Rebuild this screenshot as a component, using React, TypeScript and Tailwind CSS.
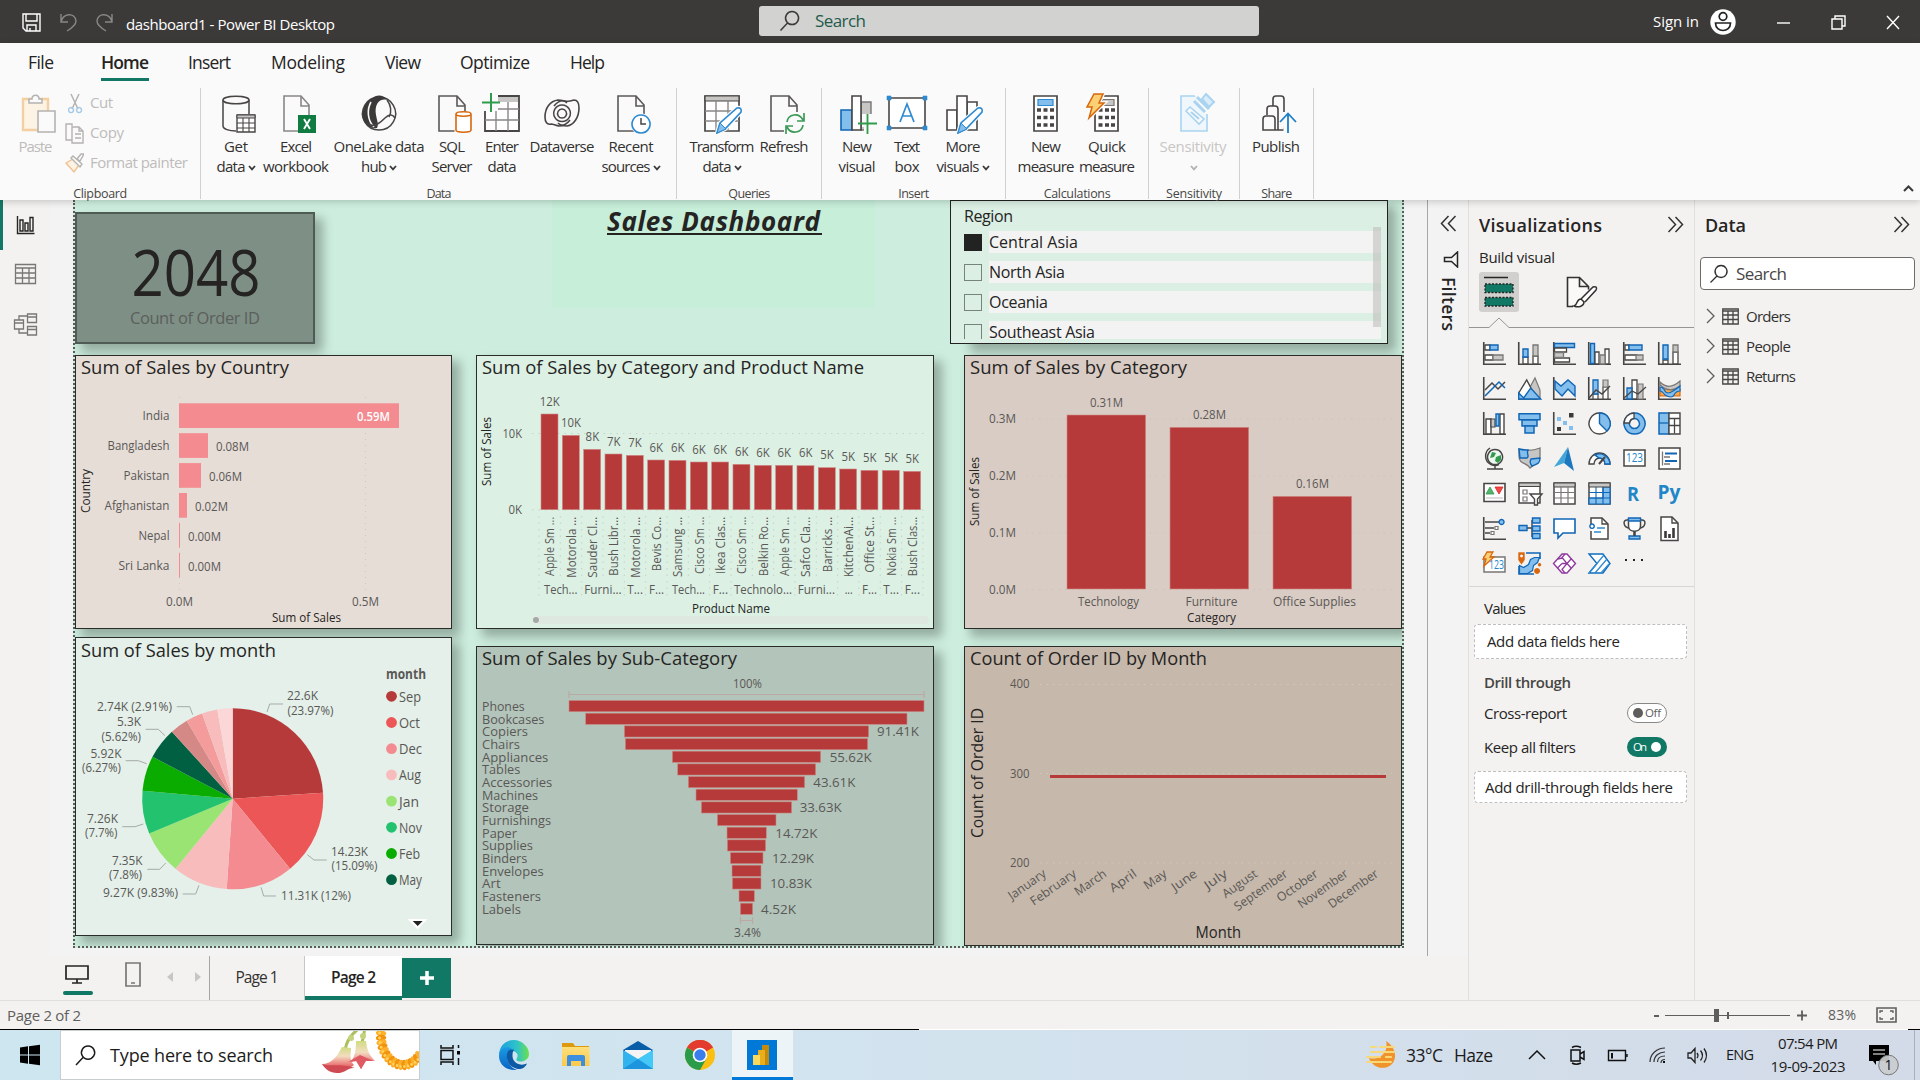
import React, { useLayoutEffect, useRef, useState } from "react";

const D = "#484644";
const B = "#1066b5";
const L = "#83beec";
const G = "#c8c6c4";
const M = "#797775";
const RED = "#b63a3a";
const SOFT = "#5a5856";
const INK = "#252423";

/* Single line label whose tracking adapts so that it fills the given width. */
function Fit({ w, c = "", children }: { w: number; c?: string; children: string }) {
  const ref = useRef<HTMLSpanElement>(null);
  const [ls, setLs] = useState(0);
  useLayoutEffect(() => {
    const el = ref.current;
    if (!el) return;
    const natural = el.getBoundingClientRect().width;
    setLs((w - natural) / Math.max(1, children.length - 1));
  }, []);
  return (
    <span className={"inline-block shrink-0 whitespace-nowrap " + c} style={{ width: w }}>
      <span ref={ref} style={{ letterSpacing: ls }}>{children}</span>
    </span>
  );
}

type TxProps = {
  x: number; y: number; w?: number; s?: number; f?: string; a?: "start" | "middle" | "end";
  b?: number; r?: number; children: string;
};
/* Chart text: y is the middle of the capital letters. */
function Tx({ x, y, w, s = 12.3, f = SOFT, a = "start", b = 400, r, children }: TxProps) {
  return (
    <text
      x={x} y={y} dy={s * 0.357 - (r ? 0 : 0.4)} fontSize={s} fill={f} textAnchor={a} fontWeight={b}
      textLength={w} lengthAdjust="spacingAndGlyphs"
      transform={r ? `rotate(${r} ${x} ${y})` : undefined}
    >
      {children}
    </text>
  );
}

type Shape = [string, string?, string?, number?];
function Draw({ s }: { s: Shape[] }) {
  return (
    <>
      {s.map(([d, f = "none", k = D, sw = 1.4], i) => (
        <path key={i} d={d} fill={f} stroke={k} strokeWidth={sw} />
      ))}
    </>
  );
}
const N = "none";

/* ---------- ribbon ---------- */
const DOC = (x: number): Shape => [`M${x} 96h18l8 9v26h-26zM${x + 18} 96v10h8`, "#fafafa", "#5b5957", 1.6];

const ic: Record<string, React.ReactNode> = {
  get: <Draw s={[
    ["M223 100v26c0 3 6 5 13 5M249 100v14", N, D, 1.5],
    ["M223 100c0-5 26-5 26 0s-26 5-26 0z", "#fafafa", D, 1.5],
    ["M237 115h18v17h-18z", "#fff", D, 1.4], ["M237 115h18v3h-18z", G, D, 1],
    ["M237 123h18M237 128h18M243 118v14M249 118v14", N, D, 1.1]]} />,
  excel: <><Draw s={[["M284 96h17l8 9v26h-25zM301 96v10h8", "#fafafa", "#8a8886", 1.6], ["M298 115h18v18h-18z", "#107c41", N]]} />
    <Draw s={[["M304 119l6 10M310 119l-6 10", N, "#fff", 1.9]]} /></>,
  lake: <Draw s={[
    ["M379 97a16.500 16.500 0 1 0 .1 0z", "#fafafa", D, 1.5],
    ["M373 98c4-4 11-3 14 2c-7-2-13 4-11 15c1 6 3 9 1 13c-6 1-12-3-14-9c-2-8 2-18 10-21z", "#3b3a39", N],
    ["M371 102c-4 7-4 18 3 25", N, "#fafafa", 1.6],
    ["M367 123c6 6 13 0 18-5s8-3 10 0M387 100c4 5 5 12 2 17", N, D, 1.5]]} />,
  sql: <Draw s={[DOC(439), ["M456 113h16v20h-16z", "#fafafa", "#fafafa", 3],
    ["M456 114v16c0 3 15 3 15 0v-16c0-3-15-3-15 0s15 3 15 0", "#fff", "#d8670d", 1.6]]} />,
  enter: <Draw s={[["M485 96h34v35h-34z", "#fff", D, 1.8], ["M497 97h21v5h-21z", G, N], ["M485 109h34M485 120h34M496 104v27M508 102v29", N, "#8a8886", 1.4],
    ["M480 94h18v17h-18z", "#fafafa", N], ["M491 93v19M482 102.500h18", N, "#2f9b4c", 2]]} />,
  verse: <Draw s={[
    ["M570 120c-3 4-7 6-11 6c-4-1-6-2-8-2c-4 1-6-2-6-7c0-9 5-16 13-17c4 0 7 1 9 3", N, D, 1.6],
    ["M554 106c3-4 7-6 11-5c4 1 6 0 9-1c4 0 5 3 5 8c0 9-5 17-12 18c-4 0-7-1-9-3", N, D, 1.6],
    ["M562 105a8.300 8.300 0 1 0 .1 0zM562 109a4.500 4.500 0 1 0 .1 0z", N, D, 1.5]]} />,
  recent: <Draw s={[DOC(618), ["M641 115a9 9 0 1 0 .1 0z", "#fafafa", "#fafafa", 3], ["M641 115a9 9 0 1 0 .1 0z", "#fff", "#2e8ad0", 1.6], ["M641 118v6h5", N, D, 1.5]]} />,
  transform: <Draw s={[["M705 96h34v35h-34z", "#fff", D, 1.7], ["M705 96h34v5h-34z", G, D, 1.2], ["M705 111h34M705 121h34M716 101v30M728 101v30", N, "#8a8886", 1.4],
    ["M717 133l3-10l17-15q5-1 4 4l-16 17z", "#fff", "#fafafa", 4], ["M717 133l3-10l17-15q5-1 4 4l-16 17z", "#fff", "#2e8ad0", 1.6], ["M717 133l3-10l6 6z", L, "#2e8ad0", 1]]} />,
  refresh: <Draw s={[DOC(771), ["M784 112h22v22h-22z", "#fafafa", N], ["M787 122c1-8 12-10 16-2M803 125c-1 8-12 10-16 2M804 113v8h-7M786 134v-8h7", N, "#3c9a58", 1.7]]} />,
  visual: <Draw s={[["M861 102h10v28h-10z", G, M, 1.4], ["M841 110h11v20h-11z", L, B, 1.6], ["M852 96h9v34h-9z", "#fff", D, 1.6], ["M862 114h15v20h-13v-7h-2z", "#fafafa", N], ["M867.500 114v20M858 123.500h19", N, "#2f9b4c", 1.8]]} />,
  textbox: <><Draw s={[["M889 98h36v30h-36z", "#fff", D, 1.6], ["M887 96h4v4h-4zM923 96h4v4h-4zM887 126h4v4h-4zM923 126h4v4h-4z", "#2e8ad0", "#2e8ad0", .6], ["M900 122l7-18l7 18M902.500 116h9", N, "#2e8ad0", 1.7]]} /></>,
  more: <Draw s={[["M947 110h10v20h-10zM967 102h10v28h-10z", "#fff", D, 1.6], ["M957 96h10v34h-10z", "#fff", D, 1.6],
    ["M958 133l3-10l17-15q5-1 4 4l-16 17z", "#fff", "#fafafa", 4], ["M958 133l3-10l17-15q5-1 4 4l-16 17z", "#fff", "#2e8ad0", 1.6], ["M958 133l3-10l6 6z", L, "#2e8ad0", 1]]} />,
  measure: <Draw s={[["M1034 96h23v35h-23z", "#fff", D, 1.7], ["M1038 99.500h15v6h-15z", L, "#2e8ad0", 1.2], ["M1037 110h4M1043.500 110h4M1050 110h4M1037 117.500h4M1043.500 117.500h4M1050 117.500h4M1037 125h4M1043.500 125h4M1050 125h4", N, D, 3.6]]} />,
  quick: <Draw s={[["M1095 96h23v35h-23z", "#fff", D, 1.7], ["M1102 99.500h12v6h-12z", G, M, 1.2], ["M1098.500 110h4M1105 110h4M1111 110h4M1098.500 117.500h4M1105 117.500h4M1111 117.500h4M1098.500 125h4M1105 125h4M1111 125h4", N, D, 3.6],
    ["M1094 94h9l-4 9h5l-15 15l3-11h-5z", "#fafafa", "#fafafa", 4], ["M1094 94h9l-4 9h5l-15 15l3-11h-5z", "#fbcf73", "#d8670d", 1.5]]} />,
  sens: <Draw s={[["M1181 96h26v35h-26z", "#eff7fc", "#a9d3f0", 1.6], ["M1194 94h22v20h-10z", "#fafafa", N],
    ["M1186 111l4-4l14 12l-5 5z", "#fafafa", "#a9d3f0", 1.6], ["M1191 112l8 7", N, "#a9d3f0", 2.2],
    ["M1197 97l12 12M1194 101l11 11", N, "#a9d3f0", 3], ["M1202 99l4-5l8 8l-5 5z", "#d9ecf8", "#a9d3f0", 2]]} />,
  publish: <Draw s={[["M1284 130v-31q0-3-3-3h-5q-3 0-3 3v7M1278 130v-21q0-3-3-3h-5q-3 0-3 3v6", "#fafafa", D, 1.6], ["M1275 130v-11q0-3-3-3h-6q-3 0-3 3v11h24", "#fafafa", D, 1.6], ["M1281 112h15v22h-12z", "#fafafa", N], ["M1288 133v-19M1280 122l8-8.500l8 8.500", N, "#1f7fc4", 1.8]]} />,
};

type Btn = { x: number; w: number; i: string; a: string; aw: number; b?: string; bw?: number; v?: boolean; off?: boolean };
const groups: { w: number; label: string; lw: number; btns: Btn[] }[] = [
  { w: 476, label: "Data", lw: 25, btns: [
    { x: 211, w: 50, i: "get", a: "Get", aw: 24, b: "data", bw: 29, v: true },
    { x: 261, w: 70, i: "excel", a: "Excel", aw: 32, b: "workbook", bw: 66 },
    { x: 331, w: 96, i: "lake", a: "OneLake data", aw: 91, b: "hub", bw: 26, v: true },
    { x: 427, w: 50, i: "sql", a: "SQL", aw: 26, b: "Server", bw: 41 },
    { x: 477, w: 50, i: "enter", a: "Enter", aw: 34, b: "data", bw: 29 },
    { x: 527, w: 70, i: "verse", a: "Dataverse", aw: 65 },
    { x: 597, w: 68, i: "recent", a: "Recent", aw: 45, b: "sources", bw: 49, v: true }] },
  { w: 145, label: "Queries", lw: 42, btns: [
    { x: 687, w: 70, i: "transform", a: "Transform", aw: 65, b: "data", bw: 29, v: true },
    { x: 757, w: 54, i: "refresh", a: "Refresh", aw: 49 }] },
  { w: 184, label: "Insert", lw: 31, btns: [
    { x: 832, w: 50, i: "visual", a: "New", aw: 30, b: "visual", bw: 37 },
    { x: 882, w: 50, i: "textbox", a: "Text", aw: 26, b: "box", bw: 25 },
    { x: 932, w: 62, i: "more", a: "More", aw: 35, b: "visuals", bw: 43, v: true }] },
  { w: 143, label: "Calculations", lw: 67, btns: [
    { x: 1016, w: 60, i: "measure", a: "New", aw: 30, b: "measure", bw: 57 },
    { x: 1076, w: 62, i: "quick", a: "Quick", aw: 38, b: "measure", bw: 56 }] },
  { w: 91, label: "Sensitivity", lw: 56, btns: [{ x: 1158, w: 70, i: "sens", a: "Sensitivity", aw: 67, v: true, off: true }] },
  { w: 74, label: "Share", lw: 31, btns: [{ x: 1248, w: 56, i: "publish", a: "Publish", aw: 48 }] },
];

const Chev = ({ c = "#3b3a39" }: { c?: string }) => (
  <svg width="8" height="6" viewBox="0 0 8 6" className="mt-[4px] ml-[2px]"><path d="M1 1l3 3.300L7 1" fill="none" stroke={c} strokeWidth="1.800" /></svg>
);

function Ribbon() {
  return (
    <div className="relative z-20 h-[157px] bg-[#fafafa] shadow-[0_2px_7px_rgba(0,0,0,0.18)]">
      <div className="flex h-[45px] items-start pl-7 text-[17.5px] leading-[38px] text-[#252423]">
        <Fit w={26}>File</Fit>
        <div className="ml-[47px] h-[38px] border-b-3 border-[#117865] font-semibold"><Fit w={48}>Home</Fit></div>
        <Fit w={43} c="ml-[39px]">Insert</Fit>
        <Fit w={74} c="ml-10">Modeling</Fit>
        <Fit w={36} c="ml-10">View</Fit>
        <Fit w={70} c="ml-[39px]">Optimize</Fit>
        <Fit w={35} c="ml-10">Help</Fit>
      </div>
      <div className="flex h-[111px]">
        <div className="flex w-[201px] flex-col border-r border-[#d2d0ce] text-[15px] text-[#bebcba]">
          <div className="flex h-[92px] shrink-0">
            <div className="ml-[18px] flex w-[35px] flex-col items-center">
              <svg width="36" height="40" viewBox="20 94 36 40" className="mt-1.5 ml-1.5 shrink-0">
                <Draw s={[["M22 99h25v31h-25z", "#fdf3e4", "#f3cfa2", 2.4], ["M28 103v-4h3c0-5 7-5 7 0h3v4z", "#fafafa", "#b5b3b1", 1.5], ["M37 111h17v21h-17z", "#fafafa", "#b5b3b1", 1.6]]} />
              </svg>
              <Fit w={34} c="mt-[2px] leading-5">Paste</Fit>
            </div>
            <div className="ml-3 leading-[28px]">
              <div className="flex h-[30px] items-center gap-[6px]">
                <svg width="19" height="24" viewBox="65 91 19 24"><Draw s={[["M71 94l7 15M79 94l-7 15", N, "#b5b3b1", 1.5], ["M71 107.500a2.500 2.500 0 1 0 .1 0zM79 107.500a2.500 2.500 0 1 0 .1 0z", N, "#a6cbe6", 1.5]]} /></svg>
                <Fit w={23} c="mb-0.5">Cut</Fit>
              </div>
              <div className="flex h-[30px] items-center gap-[6px]">
                <svg width="19" height="24" viewBox="65 121 19 24"><Draw s={[["M72 126v-2h-6v16h6", N, "#b5b3b1", 1.4], ["M72 127h7l4 4v12h-11zM79 127v4h4M75 134h6M75 138h6", "#fafafa", "#b5b3b1", 1.4]]} /></svg>
                <Fit w={34} c="mb-0.5">Copy</Fit>
              </div>
              <div className="flex h-[30px] items-center gap-[6px]">
                <svg width="19" height="24" viewBox="65 151 19 24"><Draw s={[["M66 163l7-4l6 6l-5 7z", "#fdf3e4", "#f0c190", 1.4], ["M71 158l2-2l9 8l-2 3zM77 159l4-5h3l-4 7z", "#fafafa", "#b5b3b1", 1.4]]} /></svg>
                <Fit w={98} c="mb-0.5">Format painter</Fit>
              </div>
            </div>
          </div>
          <div className="pt-[7px] text-center text-[12.5px] leading-[14px] text-[#484644]"><Fit w={54}>Clipboard</Fit></div>
        </div>
        {groups.map((g) => (
          <div key={g.label} className="flex flex-col border-r border-[#d2d0ce]" style={{ width: g.w }}>
            <div className={"flex h-[92px] shrink-0 text-[15px] leading-5 " + (g.label === "Share" ? "pl-2" : g.label === "Sensitivity" ? "pl-[9px]" : "pl-2.5")}>
              {g.btns.map((b) => (
                <div key={b.x} className={"flex shrink-0 flex-col items-center " + (b.off ? "text-[#c8c6c4]" : "text-[#323130]")} style={{ width: b.w }}>
                  <svg width={b.w} height="42" viewBox={`${b.x} 92 ${b.w} 42`} className="mt-1 mb-[2px] block shrink-0">{ic[b.i]}</svg>
                  <Fit w={b.aw}>{b.a}</Fit>
                  <div className="flex h-5 items-center">
                    {b.b && <Fit w={b.bw ?? 0}>{b.b}</Fit>}
                    {b.v && <Chev c={b.off ? "#b3b0ad" : "#3b3a39"} />}
                  </div>
                </div>
              ))}
            </div>
            <div className="pt-[7px] text-center text-[12.5px] leading-[14px] text-[#484644]"><Fit w={g.lw}>{g.label}</Fit></div>
          </div>
        ))}
        <div className="flex flex-1 items-end justify-end pr-1.5 pb-[7px]">
          <svg width="11" height="7" viewBox="0 0 11 7"><path d="M1 6l4.500-4.500L10 6" fill="none" stroke="#3b3a39" strokeWidth="2" /></svg>
        </div>
      </div>
    </div>
  );
}

function TitleBar() {
  return (
    <div className="flex h-[43px] items-center bg-[#3b3a38] text-white">
      <svg width="96" height="22" viewBox="20 11 96 22" className="ml-5">
        <Draw s={[["M23 14h17v17h-14l-3-3zM26 14v7h11v-7M27 31v-6h9v6M30 31v-3", N, "#fff", 1.4],
          ["M61 14v8h7M61 22c2-9 14-10 15-1c0 4-4 7-9 10", N, "#8a8886", 1.4],
          ["M112 14v8h-7M112 22c-2-9-14-10-15-1c0 4 4 7 9 10", N, "#8a8886", 1.4]]} />
      </svg>
      <Fit w={209} c="ml-2.5 mt-1.5 text-[15px]">dashboard1 - Power BI Desktop</Fit>
      <div className="-mt-px ml-[424px] flex h-[30px] w-[500px] items-center rounded-[3px] bg-[#d2d2d0] text-[17px] text-[#1f5a4c]">
        <svg width="22" height="22" viewBox="0 0 22 22" className="ml-5"><path d="M13 1.500a6.500 6.500 0 1 0 .1 0zM8.500 13L1.500 20.500" fill="none" stroke="#3b3a39" strokeWidth="1.500" /></svg>
        <Fit w={51} c="ml-[14px]">Search</Fit>
      </div>
      <Fit w={46} c="ml-[394px] text-[15px]">Sign in</Fit>
      <svg width="26" height="26" viewBox="0 0 26 26" className="ml-[11px]">
        <circle cx="13" cy="13" r="12.700" fill="#fff" />
        <circle cx="13" cy="7.500" r="3.800" fill="none" stroke="#222" strokeWidth="1.700" />
        <path d="M5.500 14h15c0 10-15 10-15 0z" fill="none" stroke="#222" strokeWidth="1.700" />
      </svg>
      <svg width="130" height="20" viewBox="1774 13 130 20" className="ml-[38px]">
        <Draw s={[["M1777 24h13", N, "#fff", 1.4], ["M1832 20h10v10h-10zM1835 20v-3h10v10h-3", N, "#fff", 1.4], ["M1887 17l12 13M1899 17l-12 13", N, "#fff", 1.4]]} />
      </svg>
    </div>
  );
}

/* ---------- report visuals ---------- */
const card = "block shrink-0 border border-[#2a2c2a] shadow-[7px_7px_10px_1px_rgba(0,0,0,0.28)] ";

function CountryChart() {
  const rows: [string, number, number, string, number][] = [
    ["India", 399, 27, "0.59M", 357], ["Bangladesh", 208, 62, "0.08M", 216], ["Pakistan", 201, 46, "0.06M", 209],
    ["Afghanistan", 187, 65, "0.02M", 195], ["Nepal", 180, 31, "0.00M", 188], ["Sri Lanka", 180, 51, "0.00M", 188]];
  return (
    <svg width="377" height="274" viewBox="76 356 375 272" className={card + "mt-[11px] bg-[#e6ddd6]"}>
      <Tx x={81} y={368} w={208} s={18.500} f={INK}>Sum of Sales by Country</Tx>
      <path d="M179.500 397v194M365.500 397v194" stroke="#cfc6c0" strokeDasharray="1 5" />
      {rows.map(([n, x, w, v, vx], i) => (
        <g key={n}>
          <rect x="179" y={403.300 + i * 29.900} width={x - 179} height="24.700" fill="#f48b90" />
          <Tx x={169.500} y={416.300 + i * 29.950} w={w} a="end">{n}</Tx>
          <Tx x={vx} y={417 + i * 29.950} w={33} f={i ? SOFT : "#fff"} b={i ? 400 : 600}>{v}</Tx>
        </g>
      ))}
      <Tx x={166} y={602} w={27}>0.0M</Tx><Tx x={352} y={602} w={27}>0.5M</Tx>
      <Tx x={272} y={618.500} w={69} f={INK}>Sum of Sales</Tx>
      <Tx x={86} y={513} w={44} f={INK} r={-90}>Country</Tx>
    </svg>
  );
}

const products: [string, number, string, number][] = [
  ["12K", 222, "Apple Sm ...", 708], ["10K", 286, "Motorola  ...", 713], ["8K", 328, "Sauder Cl...", 713], ["7K", 342, "Bush Libr...", 707],
  ["7K", 346, "Motorola  ...", 713], ["6K", 360, "Bevis Co...", 694], ["6K", 361, "Samsung ...", 711], ["6K", 366, "Cisco Sm ...", 702],
  ["6K", 366, "Ikea Clas...", 702], ["6K", 373, "Cisco Sm ...", 702], ["6K", 376, "Belkin Ro...", 709], ["6K", 376, "Apple Sm ...", 708],
  ["6K", 377, "Safco Cla...", 711], ["5K", 383, "Barricks  ...", 697], ["5K", 387, "KitchenAi...", 712], ["5K", 391, "Office St...", 698],
  ["5K", 391, "Nokia Sm ...", 707], ["5K", 394, "Bush Clas...", 709]];
const cats: [string, number, number][] = [["Tech...", 252, 352], ["Furni...", 373, 485], ["T...", 502, 549], ["F...", 567, 612], ["Tech...", 636, 735], ["F...", 758, 804],
  ["Technolo...", 822, 996], ["Furni...", 1013, 1125], ["...", 1154, 1178], ["F...", 1206, 1251], ["T...", 1270, 1317], ["F...", 1334, 1380]];

function ProductChart() {
  const long = [0, 2, 4, 5, 6, 8, 9, 12, 14, 15, 16, 17, 18];
  return (
    <svg width="458" height="274" viewBox="477 356 456 272" className={card + "bg-[#dcf0e4]"}>
      <Tx x={482} y={368} w={382} s={18.500} f={INK}>Sum of Sales by Category and Product Name</Tx>
      <path d="M532 433.500h394M532 510h394" stroke="#c4d3ca" strokeDasharray="1.500 5" />
      {Array.from({ length: 19 }, (_, k) => (
        <path key={k} d={`M${539 + k * 21.330} 516V${long.includes(k) ? 598 : 578}`} stroke="#c4d3ca" strokeDasharray="1.500 5" />
      ))}
      {products.map(([v, t, n, bt], i) => {
        const x = 541 + i * 21.330;
        return (
          <g key={i}>
            <rect x={x} y={340 + t / 3} width="17" height={169.700 - t / 3} fill={RED} stroke="#cf8d88" strokeWidth=".6" />
            <Tx x={x + 8.700} y={340 + t / 3 - 12.200} w={v.length > 2 ? 20 : 13.500} a="middle">{v}</Tx>
            <Tx x={x + 9} y={340 + bt / 3} w={(bt - 530) / 3} r={-90}>{n}</Tx>
          </g>
        );
      })}
      {cats.map(([n, a, b]) => <Tx key={a} x={460 + a / 3} y={590.500} w={(b - a) / 3}>{n}</Tx>)}
      <Tx x={522} y={434} w={19.500} a="end">10K</Tx><Tx x={522} y={510} w={13.500} a="end">0K</Tx>
      <Tx x={692} y={609} w={78} f={INK}>Product Name</Tx>
      <Tx x={487} y={486} w={69} f={INK} r={-90}>Sum of Sales</Tx>
      <rect x="534" y="616" width="395" height="8" rx="4" fill="#dfe7e1" />
      <circle cx="536" cy="620" r="3.600" fill="#a3a9a5" stroke="#f3f7f4" strokeWidth=".8" />
    </svg>
  );
}

function CategoryChart() {
  const bars: [string, number, number, string, number, number, number][] = [
    ["0.31M", 1067, 415, "Technology", 1078, 61, 403], ["0.28M", 1170, 427.300, "Furniture", 1185.500, 52, 415], ["0.16M", 1273, 496.300, "Office Supplies", 1273, 83, 484]];
  return (
    <svg width="438" height="274" viewBox="965 356 436 272" className={card + "mt-[11px] bg-[#d9ccc4]"}>
      <Tx x={970} y={368} w={217} s={18.500} f={INK}>Sum of Sales by Category</Tx>
      <path d="M1026 419h370M1026 476h370M1026 533h370M1026 589.500h370" stroke="#cdc3bc" strokeDasharray="1.500 5" />
      {bars.map(([v, x, y, n, nx, nw, vy]) => (
        <g key={n}>
          <rect x={x} y={y} width="78.700" height={589 - y} fill={RED} stroke="#cf8d88" strokeWidth=".6" />
          <Tx x={x + 39.500} y={vy} w={33} a="middle">{v}</Tx>
          <Tx x={nx} y={602.500} w={nw}>{n}</Tx>
        </g>
      ))}
      {["0.3M", "0.2M", "0.1M", "0.0M"].map((v, i) => <Tx key={v} x={989} y={419.300 + i * 57} w={27}>{v}</Tx>)}
      <Tx x={1187} y={618.500} w={49} f={INK}>Category</Tx>
      <Tx x={975} y={526} w={69} f={INK} r={-90}>Sum of Sales</Tx>
    </svg>
  );
}

const slices: [number, string][] = [[86.300, RED], [140.600, "#ec5656"], [183.800, "#f48b90"], [219.200, "#f8bcbd"], [247.300, "#99e472"], [275, "#23c26f"],
  [297.600, "#0aac00"], [317.800, "#016042"], [329.500, "#d58987"], [340.200, "#f49b9b"], [350.200, "#f8bcbd"], [360, "#fbd7d7"]];
const legend: [string, number][] = [["Sep", 22], ["Oct", 21], ["Dec", 23], ["Aug", 22], ["Jan", 20], ["Nov", 23], ["Feb", 21], ["May", 23]];
const pieText: [string, number, number, number][] = [
  ["22.6K", 287, 696.500, 31], ["(23.97%)", 287.500, 711, 46], ["14.23K", 331, 852.500, 37], ["(15.09%)", 331.500, 866.500, 46], ["11.31K (12%)", 281, 896, 70],
  ["9.27K (9.83%)", 103, 893, 75], ["7.35K", 112, 861.500, 30.500], ["(7.8%)", 109, 875.500, 33], ["7.26K", 87, 819, 31], ["(7.7%)", 85, 833, 32.500],
  ["5.92K", 90.500, 754, 31], ["(6.27%)", 82, 768, 39], ["5.3K", 117, 722, 24], ["(5.62%)", 101.500, 737, 39.500], ["2.74K (2.91%)", 97, 707, 75]];

function PieChart() {
  const pt = (deg: number) => {
    const a = (deg * Math.PI) / 180;
    return `${232.700 + 90.500 * Math.sin(a)} ${798.700 - 90.500 * Math.cos(a)}`;
  };
  return (
    <svg width="377" height="299" viewBox="76 638 375 297" className={card + "mt-2 bg-[#e4f0e9]"}>
      <Tx x={81} y={651} w={195} s={18.500} f={INK}>Sum of Sales by month</Tx>
      {slices.map(([e, c], i) => (
        <path key={i} d={`M232.700 798.700L${pt(i ? slices[i - 1][0] : 0)}A90.500 90.500 0 0 1 ${pt(e)}Z`} fill={c} />
      ))}
      <path d="M267 712l2.700-8h13.300M307.300 854.700l6.700 5.300h12.700M261 887.300l2.700 8.700h12.300M199 885.300l-3.300 8.700h-13M165.700 863l-6 6.300h-12.400M143.300 824l-8.300 2.700h-12.700M146.700 763.700l-8.400-3h-12.600M165 735.700l-6.700-6.400h-12.600M192.700 714.700l-3-8h-13" fill="none" stroke="#a5aca8" />
      {pieText.map(([t, x, y, w]) => <Tx key={t} x={x} y={y} w={w}>{t}</Tx>)}
      <Tx x={386} y={674.500} w={40} s={14} b={700}>month</Tx>
      {legend.map(([n, w], i) => (
        <g key={n}>
          <circle cx="391.500" cy={696.300 + i * 26.200} r="5.400" fill={slices[i][1]} />
          <Tx x={399} y={697 + i * 26.200} w={w} s={14.300}>{n}</Tx>
        </g>
      ))}
      <path d="M407.500 919h20L417.700 929.500z" fill="#fff" /><path d="M412.700 921h10L417.700 926z" fill="#222" />
    </svg>
  );
}

const funnel: [string, number, number, number, string?, number?][] = [
  ["Phones", 327, 1392, 194], ["Bookcases", 377, 1341, 253], ["Copiers", 493, 1226, 204, "91.41K", 1251], ["Chairs", 496, 1223, 180],
  ["Appliances", 637, 1082, 265, "55.62K", 1109], ["Tables", 653, 1067, 181], ["Accessories", 685, 1034, 277, "43.61K", 1060], ["Machines", 708, 1012, 234],
  ["Storage", 724, 995, 207, "33.63K", 1019], ["Furnishings", 772, 948, 273], ["Paper", 801, 919, 171, "14.72K", 946], ["Supplies", 802, 917, 219],
  ["Binders", 811, 909, 202, "12.29K", 936], ["Envelopes", 816, 903, 251], ["Art", 817, 903, 122, "10.83K", 930], ["Fasteners", 837, 883, 243], ["Labels", 841, 878, 183, "4.52K", 903]];

function FunnelChart() {
  return (
    <svg width="458" height="299" viewBox="477 647 456 297" className={card + "mt-[17px] bg-[#b3c4ba]"}>
      <Tx x={482} y={659} w={255} s={18.500} f={INK}>Sum of Sales by Sub-Category</Tx>
      <Tx x={747.500} y={683.500} w={29} s={13.300} a="middle">100%</Tx>
      <path d="M569 691v7M924 691v7M569 694.500h355M740.500 917v7M752.500 917v7M740.500 920.500h12" fill="none" stroke="#bda9a3" strokeWidth="1.200" />
      {funnel.map(([n, a, b, e, v, vx], i) => (
        <g key={n}>
          <rect x={460 + a / 3} y={700.500 + i * 12.667} width={(b - a) / 3} height="11.200" fill={RED} stroke="#c98b86" strokeWidth=".6" />
          <Tx x={482} y={706.700 + i * 12.667} w={(e - 66) / 3} s={13.300}>{n}</Tx>
          {v && <Tx x={460 + (vx ?? 0) / 3} y={706.500 + i * 12.667} w={v.length > 5 ? 42 : 35} s={13.300}>{v}</Tx>}
        </g>
      ))}
      <Tx x={747.500} y={932.500} w={27} s={13.300} a="middle">3.4%</Tx>
    </svg>
  );
}

const months: [string, number][] = [["January", 43], ["February", 53], ["March", 36], ["April", 30], ["May", 25], ["June", 28], ["July", 25], ["August", 40], ["September", 62], ["October", 47], ["November", 58], ["December", 58]];

function LineChart() {
  return (
    <svg width="438" height="300" viewBox="965 647 436 298" className={card + "mt-[17px] bg-[#c6b8ab]"}>
      <Tx x={970} y={659} w={237} s={18.500} f={INK}>Count of Order ID by Month</Tx>
      {["400", "300", "200"].map((v, i) => <Tx key={v} x={1010} y={684.300 + i * 89.500} w={19.500}>{v}</Tx>)}
      <path d="M1040 684.500h355M1040 773.500h355M1040 863h355" stroke="#d3c7bc" strokeDasharray="1.500 5" />
      <path d="M1050 776.500h336" stroke={RED} strokeWidth="3" />
      {months.map(([m, w], i) => <Tx key={m} x={1044.500 + i * 30.200} y={872} w={w} a="end" r={-35}>{m}</Tx>)}
      <Tx x={1195.500} y={933} w={45.500} s={16.300} f={INK}>Month</Tx>
      <Tx x={977.500} y={838} w={130} s={16.300} f={INK} r={-90}>Count of Order ID</Tx>
    </svg>
  );
}

function Slicer() {
  const rows: [string, number][] = [["Central Asia", 89], ["North Asia", 76], ["Oceania", 59], ["Southeast Asia", 106]];
  return (
    <div className="relative -ml-3.5 h-36 w-[438px] shrink-0 overflow-hidden border border-[#222] bg-[#dbefe4] text-[16px] text-[#252423]">
      <div className="h-[27px] pt-[4px] pl-[13px] leading-[22px]"><Fit w={49}>Region</Fit></div>
      <div className="flex h-[112px] flex-col gap-2 overflow-hidden pt-[3px]">
        {rows.map(([n, w], i) => (
          <div key={n} className="flex h-[22px] shrink-0 items-center pl-[13px]">
            <div className={"h-[17px] w-[18px] border " + (i ? "border-[#75857c]" : "border-[#222] bg-[#222]")} />
            <div className="ml-[7px] h-[22px] w-[392px] bg-[#f3f3f3] leading-[23px]"><Fit w={w}>{n}</Fit></div>
          </div>
        ))}
      </div>
      <div className="absolute bottom-0 left-0 h-[4px] w-full bg-[#dbefe4]" />
      <div className="absolute top-[26px] right-[6px] h-[100px] w-2 bg-[#b9b5b2]/50" />
    </div>
  );
}

function Report() {
  return (
    <div className="flex h-[756px] w-[1377px] bg-[#f3f3f3] pl-[23px]">
      <div className="flex h-[748px] w-[1331px] overflow-hidden border-x-2 border-b-2 border-dotted border-[#5b5b5b] bg-[#cdeede]">
        <div className="w-[377px] shrink-0 pt-3">
          <div className="flex h-[132px] w-60 flex-col items-center border-2 border-[#4f5c55] bg-[#7e8f86] shadow-[7px_7px_10px_1px_rgba(0,0,0,0.28)]">
            <svg width="236" height="92" viewBox="77 214 236 92" className="shrink-0 overflow-visible"><Tx x={131.500} y={274} w={129} s={64} f={INK}>2048</Tx></svg>
            <Fit w={130} c="mt-[2px] text-[16.5px] leading-5 text-[#5c5f5c]">Count of Order ID</Fit>
          </div>
          <CountryChart />
          <PieChart />
        </div>
        <div className="ml-6 w-[458px] shrink-0">
          <div className="mb-[47px] ml-[76px] h-[108px] w-[323px] bg-[#c6eed9] pl-[55px] text-[26px] leading-[42px] font-bold text-[#252423] italic">
            <div className="h-[35px] w-[215px] border-b-2 border-[#252423]"><Fit w={213}>Sales Dashboard</Fit></div>
          </div>
          <ProductChart />
          <FunnelChart />
        </div>
        <div className="ml-[30px] w-[438px] shrink-0">
          <div className="h-36 w-[424px] shadow-[7px_7px_10px_1px_rgba(0,0,0,0.28)]"><Slicer /></div>
          <CategoryChart />
          <LineChart />
        </div>
      </div>
    </div>
  );
}

/* ---------- panes ---------- */
const AX: Shape = ["M.75 0v22.200H23", N, D, 1.6];
const vizIcons: Shape[][] = [
  [AX, ["M2 3h5v5h-5zM2 13h8v5h-8z", "#fff", D, 1.3], ["M7 3h8v5h-8z", L, B, 1.4], ["M10 13h10v5h-10z", G, M, 1.3]],
  [AX, ["M5 15h5v7h-5zM15 14h5v8h-5z", "#fff", D, 1.3], ["M5 7h5v8h-5z", L, B, 1.4], ["M15 3h5v11h-5z", G, M, 1.3]],
  [AX, ["M1.500 1.500h20v4h-20z", L, B, 1.4], ["M1.500 6h12v4h-12zM1.500 16h15v4h-15z", "#fff", D, 1.3], ["M1.500 10.500h9v5h-9z", G, M, 1.3]],
  [AX, ["M2.500 1.500h4v20h-4z", L, B, 1.4], ["M7 10h4v12h-4zM17 7h4v15h-4z", "#fff", D, 1.3], ["M12 13h5v9h-5z", G, M, 1.3]],
  [AX, ["M2 3h4v5h-4zM2 13h12v5h-12z", "#fff", D, 1.3], ["M6 3h13v5h-13z", L, B, 1.4], ["M13 13h7v5h-7z", G, M, 1.3]],
  [AX, ["M5 18h5v4h-5zM15 10h5v12h-5z", "#fff", D, 1.3], ["M5 3h5v14h-5z", L, B, 1.4], ["M15 3h5v7h-5z", G, M, 1.3]],
  [AX, ["M2 13l7-7l6 6l7-7", N, D, 1.5], ["M2 19l14-14l6 6", N, B, 1.5]],
  [["M11 12l6-11l5 12v9h-5z", G, M, 1.2], ["M.7 16l8-13l10 19h-18z", "#fff", D, 1.4], ["M.7 16l5 5l7-10l10 11h-22z", L, B, 1.4]],
  [AX, ["M2 4l6 5l7-6l7 6v10l-7-7l-6 7l-7-7z", L, B, 1.4]],
  [AX, ["M5 17h5v5h-5zM15 10h5v12h-5z", "#fff", D, 1.2], ["M5 3h5v14h-5z", L, B, 1.3], ["M15 3h5v7h-5z", G, M, 1.2], ["M1 21l7-8l6 4l8-8", N, D, 1.4]],
  [AX, ["M9 3h5v19h-5z", "#fff", D, 1.3], ["M4 11h5v11h-5z", L, B, 1.3], ["M15 7h5v15h-5z", G, M, 1.2], ["M1 21l8-7l6 3l8-7", N, D, 1.3]],
  [AX, ["M2 12h20v7h-20z", "#f7a94b", "#d8670d", 1.2], ["M2 5q9 9 20-1v5q-10 8-20-1z", G, M, 1.2], ["M2 10q3 0 5 4t8 0t7-5v5q-4 0-6 4t-9 0q-3-4-5-4z", L, B, 1.2]],
  [AX, ["M3 7h5v15h-5zM17 2h4v20h-4z", "#fff", D, 1.4], ["M8 7h4v8h-4z", G, D, 1.2], ["M13 2h3v12h-3z", L, B, 1.4]],
  [["M1 1.700h21v6h-21z", L, B, 1.5], ["M4 8h15v6h-15z", L, B, 1.5], ["M7 14h9v7h-9z", L, B, 1.5]],
  [AX, ["M4 5h4v4h-4zM10 9h4v4h-4zM16 14h4v4h-4z", L, N], ["M16 1h4.500v4.500h-4.500zM4 15h4v4h-4z", "#3b3a39", N]],
  [["M11.500 1a10.500 10.500 0 1 0 .1 0z", "#fff", D, 1.4], ["M11.500 1a10.500 10.500 0 0 1 7.500 18l-7.500-7.500z", L, B, 1.4]],
  [["M11.500 1a10.500 10.500 0 1 0 .1 0zM11.500 6.500a5 5 0 1 1-.1 0z", L, B, 1.5], ["M1 11a10.500 10.500 0 0 1 10-10v5.500a5 5 0 0 0-4.500 4.500z", "#fff", D, 1.3]],
  [["M1 1h10v21h-10z", L, B, 1.5], ["M11 1h11v21h-11z", "#fff", D, 1.4], ["M1 11h10", N, B, 1.3], ["M11 6.500h11M11 13.500h11M16.500 6.500v15", N, D, 1.3]],
  [["M12 2.500a7.500 7.500 0 1 0 .1 0z", "#eef6f0", D, 1.5], ["M9 5l4 1l-2 4l-4 1zM13 10l5-2v5l-3 3l-3-2z", "#2f9b4c", N], ["M7 1c-6 4-6 13 1 16.500c3 1.500 6 1 8 0M12 19v3M4 22h16", N, D, 1.5]],
  [["M1 2c7 2 14 2 21-1v8c0 8-6 8-10 12c-3-6-11-3-11-12z", G, M, 1.3], ["M1 2c4 1 7 1 9 1c-2 4 2 6-1 8h-7zM13 12l9-1c0 7-5 6-8 8c-2-2-2-5-1-7z", L, B, 1.4]],
  [["M15 0L1 20l10-4z", "#42a7d6", N], ["M15 0l6 24l-10-8z", "#1d78c0", N]],
  [["M1 17a10.500 11 0 0 1 21 0h-5a5.500 6 0 0 0-11 0z", "#fff", D, 1.4], ["M7 8a10.500 11 0 0 1 15 9h-5a5.500 6 0 0 0-6-6z", L, B, 1.4], ["M11 17l6-7", N, D, 2]],
  [["M1 3h21v16h-21z", "#fff", D, 1.5]],
  [["M1 1h21v21h-21z", "#fff", D, 1.5], ["M4.500 4.500v14M6 10h6M6 17h6", N, M, 1.3], ["M7 6.500h12M7 14h12", N, B, 2]],
  [["M1 1.500h21v18h-21z", "#fff", D, 1.6], ["M3 12l4-7l4 7z", "#57b26c", "#2f9b4c", .8], ["M12 5h8l-4 7z", "#ee4b4b", "#d22", .8], ["M3 16h17", N, G, 1.2]],
  [["M1 1h21v20h-21z", "#fff", D, 1.5], ["M1 1h21v3.500h-21z", G, D, 1], ["M5 8h4v4h-4zM5 15h4v4h-4z", "#fff", M, 1.2], ["M12 12h12l-4.500 5v6h-3v-6z", "#fff", D, 1.4]],
  [["M1 1h21v21h-21z", "#fff", D, 1.5], ["M1 1h21v4h-21z", G, D, 1], ["M1 10.500h21M1 16h21M8 5v17M15 5v17", N, M, 1.2]],
  [["M1 1h21v21h-21z", "#fff", D, 1.5], ["M15 5h7v17h-21v-6h14z", L, B, 1.2], ["M1 1h21v4h-21z", G, D, 1], ["M1 10.500h21M1 16h21M8 5v17M15 5v17", N, B, 1.1]],
  [], [],
  [AX, ["M2 5h14M2 11h9M2 16h5", N, D, 1.4], ["M18.500 2.500a2.500 2.500 0 1 0 .1 0z", L, B, 1.4], ["M12 9.500h3v3h-3zM8 14.500h3v3h-3z", "#fff", M, 1.2]],
  [["M9 11h5M14 3v17M14 3h3M14 20h3M14 11h3", N, D, 1.4], ["M1 8.500h8v5h-8zM14.500 1h7.500v5h-7.500zM14.500 9h7.500v5h-7.500zM14.500 16.500h7.500v5h-7.500z", L, B, 1.4]],
  [["M1 2h21v14h-12l-5 5v-5h-4z", "#fff", B, 1.6]],
  [["M3 7v-6h11l6 6v15h-17v-8", "#fff", D, 1.5], ["M14 1v6h6", N, D, 1.3], ["M4 7a2.200 2.200 0 1 0 .1 0z", "#fff", B, 1.4], ["M9 11h8M6 15h7", N, "#2e8ad0", 1.4]],
  [["M5 3c-6-1-5 8 2 8M18 3c6-1 5 8-2 8", N, D, 1.5], ["M5.500 2h12v7c0 7-12 7-12 0z", "#fff", D, 1.5], ["M5.500 1h12v3h-12zM6 19h11v3h-11z", L, B, 1.3], ["M11.500 14v5", N, D, 2.6]],
  [["M3 0h11l6 6v17.500h-17z", "#fff", D, 1.5], ["M14 0v6h6", N, D, 1.4], ["M7.500 14v7M11.500 17v4M15.500 11v10", N, "#3b3a39", 2.6]],
  [["M1 5h21v15h-21z", "#fff", M, 1.5], ["M4 0h6l-3 5h4l-10 9l2-7h-3z", "#fbcf73", "#d8670d", 1.3]],
  [["M8 1h14v6M1 14v8h15", N, B, 1.6], ["M1.500 21.500v-8l4 2l5-3l2-5l4-2h5l-2 5l-4 3l-1 5l-5 3z", L, B, 1.2], ["M0 0h7v8l-3.500 5l-3.500-5z", "#d8670d", "#f3f2f1", .6], ["M3.500 2.500a1.500 1.500 0 1 0 .1 0z", "#f3f2f1", N], ["M19 16a3 3 0 1 0 .1 0zM21.500 11a1.700 1.700 0 1 0 .1 0z", "#d8670d", N]],
  [["M9 2h5l8.500 9.500l-8.500 9.500h-5l-8.500-9.500z", "#fff", "#8f3a9c", 1.4], ["M12 2l-3 3.500l5 6l-5 6l3 3.500M4.500 7l5-1M14 11.500l4.500-5M9 11.500h5l4.500 5M4.500 16l4.500-4.500", N, "#8f3a9c", 1.3]],
  [["M1 2h14l7 9.500l-7 9.500h-14l8-9.500z", "#fff", "#0f6cbd", 1.4], ["M1 21l15-18M7 21l12-14M13 21l8-9", N, "#2e8ad0", 1.3]],
];

const blueText = "#1f86c8";
function VizGrid() {
  return (
    <div className="grid auto-rows-[35px] grid-cols-[repeat(6,35px)] pt-[14px] pl-3.5">
      {vizIcons.map((s, i) => (
        <svg key={i} width="25" height="25" viewBox="0 -1 25 25" className="-mt-px overflow-visible">
          <Draw s={s} />
          {i === 28 && <text x="4" y="19" fontSize="20" fontWeight="700" fill={blueText} textLength="12" lengthAdjust="spacingAndGlyphs">R</text>}
          {i === 29 && <text x="-.5" y="17" fontSize="20" fontWeight="700" fill={blueText} textLength="23" lengthAdjust="spacingAndGlyphs">Py</text>}
          {i === 22 && <text x="3" y="15" fontSize="12" fill={blueText} textLength="17" lengthAdjust="spacingAndGlyphs">123</text>}
          {i === 36 && <text x="6" y="17" fontSize="12" fill={blueText} textLength="15" lengthAdjust="spacingAndGlyphs">123</text>}
        </svg>
      ))}
      <svg width="25" height="25" viewBox="0 0 25 25"><path d="M2 8h2M10 8h2M18 8h2" stroke="#252423" strokeWidth="2" /></svg>
    </div>
  );
}

const Arrows = ({ left }: { left?: boolean }) => (
  <svg width="17" height="17" viewBox="0 0 17 17"><path d={left ? "M8.500 1L1.500 8.500l7 7.500M15.500 1L8.500 8.500l7 7.500" : "M1.500 1l7 7.500l-7 7.500M8.500 1l7 7.500l-7 7.500"} fill="none" stroke="#323130" strokeWidth="1.500" /></svg>
);

function Filters() {
  return (
    <div className="flex h-[756px] w-[41px] flex-col items-center border-l border-[#a8a6a4] bg-[#f3f3f3] pt-[15px]">
      <Arrows left />
      <svg width="17" height="17" viewBox="0 0 17 17" className="mt-[19px] ml-1"><path d="M15.500 1v15l-6-5.500h-7v-4h7z" fill="none" stroke="#252423" strokeWidth="1.500" /></svg>
      <div className="mt-[9px] ml-0.5 text-[17.5px] leading-[18px] font-semibold text-[#252423] [writing-mode:vertical-rl]">
        <span className="tracking-[0.3px]">Filters</span>
      </div>
    </div>
  );
}

function Visualizations() {
  return (
    <div className="h-[800px] w-[226px] border-l border-[#e1dfdd] bg-[#f3f2f1] text-[15px] text-[#252423]">
      <div className="flex h-[48px] items-end justify-between pr-2.5 pl-2.5 text-[18px] leading-[46px] font-semibold">
        <Fit w={123}>Visualizations</Fit>
        <div className="mb-[15px] leading-none"><Arrows /></div>
      </div>
      <div className="-mt-px pb-[2px] pl-[10px] leading-5"><Fit w={76}>Build visual</Fit></div>
      <svg width="225" height="60" viewBox="1469 269 225 60" className="-mb-px block">
        <rect x="1479" y="272" width="40" height="40" rx="3" fill="#d2d0ce" />
        <path d="M1484 277.500h24" stroke="#252423" strokeWidth="1.500" />
        <path d="M1485 284h28v8.500h-28zM1485 297.500h28v8.500h-28z" fill="#117865" stroke="#252423" strokeWidth="1.300" strokeDasharray="2 1.500" />
        <Draw s={[["M1573 306.500h-5.500v-29h12l9 9v3M1579.500 277.500v9h9", "#faf9f8", "#323130", 1.6], ["M1574 306c4-1 2-7 7-7l3 3c0 4-5 6-10 4zM1581 299l12-12q5-1 3 3l-11 12", "#fff", "#323130", 1.5],
          ["M1469 327.500h20l10-9.500l10 9.500h185", N, "#979593", 1]]} />
      </svg>
      <div className="h-[259px] border-b border-[#d8d6d4]"><VizGrid /></div>
      <div className="flex h-[37px] items-center pt-1.5 pl-[15px]"><Fit w={42}>Values</Fit></div>
      <div className="ml-[5px] flex h-[35px] w-[213px] items-center rounded-sm border border-dashed border-[#c0bebc] bg-white pl-[12px]"><Fit w={133}>Add data fields here</Fit></div>
      <div className="mt-[12px] pl-[15px] leading-[22px] font-semibold text-[#484644]"><Fit w={87}>Drill through</Fit></div>
      <div className="mt-[9px] flex h-[22px] items-center pl-[15px]">
        <Fit w={83}>Cross-report</Fit>
        <div className="ml-[60px] flex h-5 w-10 items-center rounded-full border border-[#8a8886] bg-white pl-[5px] text-[11.5px] text-[#605e5c]"><span className="mr-[2px] h-2.5 w-2.5 rounded-full bg-[#605e5c]" /><Fit w={16}>Off</Fit></div>
      </div>
      <div className="mt-3 flex h-[22px] items-center pl-[15px]">
        <Fit w={92}>Keep all filters</Fit>
        <div className="ml-[51px] flex h-5 w-10 items-center rounded-full bg-[#117865] pl-1.5 text-[11.5px] text-white"><Fit w={14}>On</Fit><span className="ml-1 h-2.5 w-2.5 rounded-full bg-white" /></div>
      </div>
      <div className="mt-[13px] ml-[5px] flex h-[32px] w-[213px] items-center rounded-sm border border-dashed border-[#c0bebc] bg-white pl-2.5"><Fit w={188}>Add drill-through fields here</Fit></div>
    </div>
  );
}

function DataPane() {
  const rows: [string, number][] = [["Orders", 45], ["People", 45], ["Returns", 50]];
  return (
    <div className="h-[800px] w-[226px] border-l border-[#e1dfdd] bg-[#f3f2f1] text-[15px] text-[#323130]">
      <div className="flex h-[48px] items-end justify-between pr-2.5 pl-[10px] text-[18px] leading-[46px] font-semibold text-[#252423]">
        <Fit w={41}>Data</Fit>
        <div className="mb-[15px] leading-none"><Arrows /></div>
      </div>
      <div className="mt-[9px] ml-[5px] flex h-[33px] w-[215px] items-center rounded-sm border border-[#6e6c6a] bg-white pl-[8px] text-[17px] text-[#484644]">
        <svg width="20" height="20" viewBox="0 0 20 20"><path d="M12 1.500a6 6 0 1 0 .1 0zM8 12L1.500 18.500" fill="none" stroke="#323130" strokeWidth="1.300" /></svg>
        <Fit w={51} c="ml-[7px] mt-px">Search</Fit>
      </div>
      <div className="pt-[11px]">
        {rows.map(([n, w]) => (
          <div key={n} className="flex h-[30px] items-center pl-[11px]">
            <svg width="9" height="16" viewBox="0 0 9 16"><path d="M1 1l7 7l-7 7" fill="none" stroke="#605e5c" strokeWidth="1.300" /></svg>
            <svg width="17" height="17" viewBox="0 0 17 17" className="ml-[7px]"><path d="M.75 1h15.500v15H.75zM.75 3h15.500M.75 7h15.500M.75 11.500h15.500M6 3v13M11 3v13" fill="none" stroke="#484644" strokeWidth="1.300" /></svg>
            <Fit w={w} c="ml-[7px]">{n}</Fit>
          </div>
        ))}
      </div>
    </div>
  );
}

function PageTabs() {
  return (
    <div className="flex h-11 w-[1468px] bg-[#f3f2f1] text-[15.5px] text-[#323130]">
      <svg width="210" height="44" viewBox="0 956 210 44">
        <Draw s={[["M66 966h22v13h-22zM77 979v4M72 983h10", N, "#252423", 1.7], ["M126 963h14v23h-14zM131 983h4", N, "#797775", 1.7], ["M209.500 956v44", N, "#a8a6a4", 1],
          ["M173 972v10l-6-5z", G, N], ["M195 972v10l6-5z", G, N]]} />
        <rect x="63" y="991" width="30" height="4" rx="2" fill="#117865" />
      </svg>
      <div className="flex w-[95px] items-center justify-center border-r border-[#c8c6c4]"><Fit w={43}>Page 1</Fit></div>
      <div className="flex w-[97px] items-center justify-center border-b-4 border-[#117865] bg-white pt-[3px] font-semibold text-[#252423]"><Fit w={45}>Page 2</Fit></div>
      <div className="mt-0.5 flex h-10 w-[49px] items-center justify-center bg-[#117865]">
        <svg width="14" height="14" viewBox="0 0 14 14"><path d="M7 0v14M0 7h14" stroke="#fff" strokeWidth="3.500" /></svg>
      </div>
    </div>
  );
}

function StatusBar() {
  return (
    <div className="flex h-[29px] items-center border-t border-[#e1dfdd] bg-[#f3f2f1] pl-[7px] text-[15px] text-[#605e5c]">
      <Fit w={74}>Page 2 of 2</Fit>
      <svg width="160" height="28" viewBox="1650 1001 160 28" className="ml-[1569px]">
        <Draw s={[["M1665 1015.500h125", N, "#605e5c", 1.2], ["M1716.500 1009v13", N, "#605e5c", 5], ["M1728 1012v7", N, "#605e5c", 2], ["M1654 1016h5M1797 1015.500h10M1802 1010.500v10", N, "#605e5c", 1.8]]} />
      </svg>
      <Fit w={28} c="-mt-px ml-[18px] text-[14px]">83%</Fit>
      <svg width="21" height="16" viewBox="0 0 21 16" className="ml-5"><path d="M1 1h19v14H1z" fill="none" stroke="#605e5c" strokeWidth="1.600" /><path d="M4 6V4h3M14 4h3v2M17 10v2h-3M7 12H4v-2" fill="none" stroke="#605e5c" strokeWidth="1.300" /></svg>
    </div>
  );
}

/* ---------- Windows taskbar ---------- */
function Taskbar() {
  const beads = Array.from({ length: 17 }, (_, i) => {
    const a = Math.PI * (1.03 - (i / 16) * 0.8);
    return [403 + 22 * Math.cos(a), 1036 + 29 * Math.sin(a), (a * 180) / Math.PI];
  });
  return (
    <div className="flex h-[50px] items-center bg-linear-to-r from-[#cde6f0] via-[#d2e3ee] to-[#d3dae8] text-[#1b1b1b]">
      <svg width="60" height="50" viewBox="0 1030 60 50"><path d="M20 1047.500l8-1.200v8.200h-8zM29 1046.200l11-1.400v9.700h-11zM20 1055.500h8v8.200l-8-1.200zM29 1055.500h11v9.700l-11-1.400z" fill="#000" /></svg>
      <div className="flex h-[50px] w-[360px] items-center border border-[#c8cdd0] bg-white text-[18px]">
        <svg width="24" height="24" viewBox="0 0 24 24" className="ml-3"><path d="M15 3a6.600 6.600 0 1 0 .1 0zM10 14.500L3 22" fill="none" stroke="#1b1b1b" strokeWidth="1.500" /></svg>
        <Fit w={163} c="ml-[13px]">Type here to search</Fit>
        <svg width="98" height="48" viewBox="321 1031 98 48" className="ml-[48px]">
          <defs>
            <linearGradient id="petal" x1="0" y1="0" x2="0" y2="1"><stop offset="0" stopColor="#cfdc80" /><stop offset=".4" stopColor="#f3ddc0" /><stop offset=".8" stopColor="#ea7375" /><stop offset="1" stopColor="#cf4148" /></linearGradient>
          </defs>
          <path d="M345 1050q2-12 12-20M361.500 1044q2-6 3-14" stroke="#aac05e" strokeWidth="3" strokeLinecap="round" fill="none" />
          <circle cx="351" cy="1038" r="3" fill="#c3d27c" /><circle cx="363" cy="1036" r="3" fill="#c3d27c" />
          <path d="M342 1047l9 1c0 7-2 12 3 17c-4 4-14 6-24 4c-3 0-6-3-8-5c9 0 15-7 20-17z" fill="url(#petal)" />
          <path d="M356 1041h10c1 9 3 14 9 20l-9-1l-5 9l-4-8l-7 1c5-4 6-12 6-21z" fill="url(#petal)" />
          <path d="M322 1064c8 3 18-1 33 4c-7-1-9 5-18 5c-7 0-12-4-15-9z" fill="#cf4a53" />
          <path d="M348 1062l12-7l14 6l-8 0l-5 8l-5-8z" fill="#df5a63" />
          {beads.map(([x, y, a], i) => (
            <g key={i} transform={`rotate(${a} ${x} ${y})`}>
              <ellipse cx={x} cy={y} rx="5.200" ry="3" fill={i % 2 ? "#f2940f" : "#fdb02a"} /><circle cx={x + 1.500} cy={y} r="1.500" fill="#ffd35c" />
            </g>
          ))}
        </svg>
      </div>
      <svg width="60" height="50" viewBox="420 1030 60 50"><path d="M441 1045v3h12v-3M441 1065v-3h12v3M441 1050.500h12v9h-12zM458.500 1045v3M458.500 1058v7" fill="none" stroke="#111" strokeWidth="1.500" /><rect x="457" y="1051" width="3" height="3.500" /></svg>
      <svg width="252" height="50" viewBox="480 1030 252 50">
        <defs>
          <linearGradient id="e1" x1="0" y1="0" x2="1" y2="0"><stop offset="0" stopColor="#1c9fe0" /><stop offset=".6" stopColor="#2fc3c9" /><stop offset="1" stopColor="#6be04b" /></linearGradient>
          <linearGradient id="e2" x1="0" y1="0" x2="0" y2="1"><stop offset="0" stopColor="#1a9be3" /><stop offset="1" stopColor="#0a63c4" /></linearGradient>
          <linearGradient id="fo" x1="0" y1="0" x2="0" y2="1"><stop offset="0" stopColor="#ffdf7b" /><stop offset="1" stopColor="#fbc94b" /></linearGradient>
        </defs>
        <path d="M499 1054c1-9 7-14 15-14s15 7 15 14c0 6-6 8-10 7.500c-3-.5-3-2-2-3.500c2-4-1-7-6-7c-6 0-11 3-12 3z" fill="url(#e1)" />
        <path d="M499 1056c0-8 9-11 13-7c-6 2-6 9-3 14c2 4 5 6 8 7c-10 1-18-5-18-14z" fill="url(#e2)" />
        <path d="M508 1051c-4 8 2 18 12 18c3 0 6-3 7-5.500c-6 3-14 0-14.500-7c0-3 0-5 1.500-6.500c-2-1-5 0-6 1z" fill="#0c59a4" />
        <path d="M562 1043h11l2 3h14v20h-27z" fill="#dd9a0e" /><path d="M562 1047h27.500v19h-27.500z" fill="url(#fo)" />
        <path d="M567 1066v-9q0-2 2-2h14q2 0 2 2v9h-4v-5h-10v5z" fill="#3c8fdf" />
        <path d="M623 1050l15-9l15 9v4h-30z" fill="#0a5ea8" /><path d="M625 1050h26v8l-13 6l-13-6z" fill="#f4f4f4" /><path d="M623 1050l15 9l15-9v19h-30z" fill="#31b3ee" /><path d="M653 1050l-24 15l24 4z" fill="#44c8f7" /><path d="M623 1069l15-10l15 10z" fill="#1c94de" />
        <circle cx="700" cy="1055" r="15" fill="#fbbf12" /><path d="M700 1055l-13-7.500a15 15 0 0 1 26 0z" fill="#e33b2e" /><path d="M700 1055l-13-7.500a15 15 0 0 0 13 22.500l6.500-11.500z" fill="#2a9b48" />
        <path d="M687 1047.500a15 15 0 0 1 26 0h-13z" fill="#e33b2e" /><circle cx="700" cy="1055" r="7.300" fill="#fff" /><circle cx="700" cy="1055" r="5.700" fill="#3b7ded" />
      </svg>
      <div className="flex h-[50px] w-[61px] justify-center border-b-3 border-[#0078d7] bg-[#ecf4f8] pt-2.5 pr-px">
        <svg width="30" height="30" viewBox="0 0 30 30"><rect width="30" height="30" fill="#0078d7" /><rect x="15" y="5" width="7" height="20" fill="#c48a0c" /><rect x="11" y="10" width="7" height="15" fill="#e8ae1c" /><rect x="6" y="15" width="7" height="10" fill="#f8d95c" /></svg>
      </div>
      <svg width="34" height="34" viewBox="1364 1038 34 34" className="ml-[571px]">
        <path d="M1386 1041c10 6 12 18 5 24c-8 6-19 2-22-7c11 3 20-6 17-17z" fill="#f0932b" />
        <path d="M1371 1047h5M1380 1047h14M1371 1052h23M1367 1057h13M1386 1057h5M1367 1062h24" stroke="#f8d979" strokeWidth="2.200" strokeLinecap="round" />
      </svg>
      <Fit w={37} c="ml-2 text-[17.5px]">33°C</Fit>
      <Fit w={39} c="ml-[11px] text-[17.5px]">Haze</Fit>
      <svg width="190" height="34" viewBox="1524 1038 190 34" className="ml-[31px]">
        <Draw s={[["M1529 1059l8-8l8 8", N, "#111", 1.5],
          ["M1571 1050h9v11h-9zM1580 1054l4-2.500v8l-4-2.500M1572 1047.500q4-2.500 9 0M1572 1063q4 2.500 9 0", N, "#111", 1.5],
          ["M1608.500 1050.500h17v10h-17zM1627 1054v3", N, "#111", 1.4], ["M1611 1053h2v5.500h-2z", "#111", N],
          ["M1650 1062c0-8 7-14 15-14M1654 1062c0-6 5-10 11-10M1657.500 1062c0-4 3-6 7.500-6M1661 1063c0-3 2-3.500 4-3.500", N, "#333", 1.2], ["M1663 1061h2v2h-2z", "#111", N],
          ["M1688 1053h3l4-4.500v14l-4-4.500h-3zM1697 1053q2 2.500 0 5M1700.500 1050.500q4 5 0 10M1704 1048.500q5 7 0 14", N, "#222", 1.3]]} />
      </svg>
      <Fit w={28} c="ml-3 text-[14.5px]">ENG</Fit>
      <div className="ml-4 flex w-[76px] flex-col items-center text-[15px] leading-[23px]"><Fit w={60}>07:54 PM</Fit><Fit w={75}>19-09-2023</Fit></div>
      <svg width="52" height="50" viewBox="1868 1030 52 50" className="ml-[22px]">
        <path d="M1869 1045h20v16h-13v4l-3-4h-4z" fill="#000" /><path d="M1873 1050h12M1873 1054h12" stroke="#fff" strokeWidth="1.200" />
        <circle cx="1888.500" cy="1065" r="9.800" fill="#c9ccd0" fillOpacity=".93" stroke="#777" /><text x="1888.500" y="1070" fontSize="14" textAnchor="middle" fill="#111">1</text>
        <path d="M1914.500 1030v50" stroke="#a9b1bb" />
      </svg>
    </div>
  );
}

export default function App() {
  return (
    <div className="h-[1080px] w-[1920px] overflow-hidden bg-[#f3f2f1] font-['Open_Sans',sans-serif]">
      <TitleBar />
      <Ribbon />
      <div className="flex h-[800px]">
        <div className="flex w-[1468px] flex-col">
          <div className="flex h-[756px]">
            <div className="w-[50px] bg-[#f3f2f1]">
              <svg width="50" height="150" viewBox="0 200 50 150">
                <rect y="200" width="3" height="50" fill="#117865" />
                <Draw s={[["M17.500 216v17.500h17M20 220h3v11h-3zM25 223h3v8h-3zM30 217.500h3v13.500h-3z", N, "#252423", 1.4],
                  ["M15.500 264.500h20v19h-20zM15.500 268h20M15.500 273h20M15.500 278h20M22.500 268v16M29 268v16", N, M, 1.3],
                  ["M14.500 320h9v9h-9zM14.500 323h9M27.500 314h9v8.500h-9zM27.500 317h9M27.500 326.500h9v8.500h-9zM27.500 329.500h9M19 320v-4h8M19 329v4h8", N, M, 1.3]]} />
              </svg>
            </div>
            <Report />
            <Filters />
          </div>
          <PageTabs />
        </div>
        <Visualizations />
        <DataPane />
      </div>
      <StatusBar />
      <div className="flex h-px"><div className="w-[919px] bg-black" /><div className="w-[989px] bg-white" /><div className="flex-1 bg-black" /></div>
      <Taskbar />
    </div>
  );
}
